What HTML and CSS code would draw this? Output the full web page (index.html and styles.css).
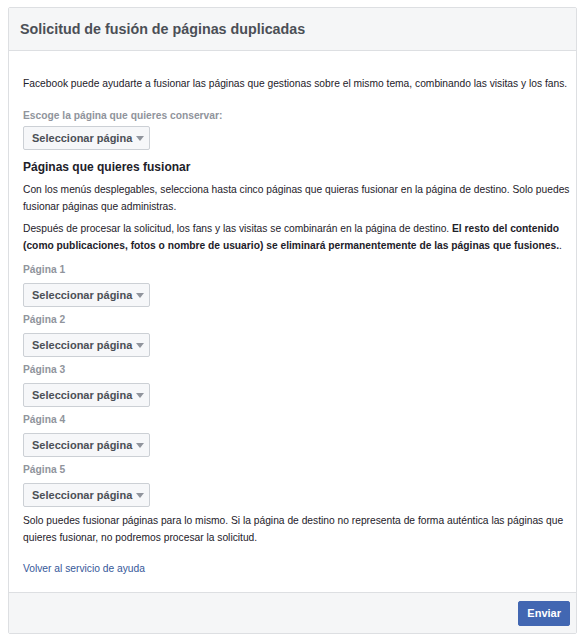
FILE: index.html
```html
<!DOCTYPE html>
<html lang="es">
<head>
<meta charset="utf-8">
<title>Solicitud de fusión de páginas duplicadas</title>
<link rel="stylesheet" href="styles.css">
</head>
<body>
<div class="panel">
  <div class="panel-header">
    <h1 class="title">Solicitud de fusión de páginas duplicadas</h1>
  </div>
  <div class="panel-body">
    <p class="intro">Facebook puede ayudarte a fusionar las páginas que gestionas sobre el mismo tema, combinando las visitas y los fans.</p>

    <div class="field field-keep">
      <div class="label">Escoge la página que quieres conservar:</div>
      <button class="select">Seleccionar página <span class="caret"></span></button>
    </div>

    <h2 class="subtitle">Páginas que quieres fusionar</h2>
    <p class="text">Con los menús desplegables, selecciona hasta cinco páginas que quieras fusionar en la página de destino. Solo puedes fusionar páginas que administras.</p>
    <p class="text text-last">Después de procesar la solicitud, los fans y las visitas se combinarán en la página de destino. <b>El resto del contenido (como publicaciones, fotos o nombre de usuario) se eliminará permanentemente de las páginas que fusiones.</b>.</p>

    <div class="field">
      <div class="label">Página 1</div>
      <button class="select">Seleccionar página <span class="caret"></span></button>
    </div>
    <div class="field">
      <div class="label">Página 2</div>
      <button class="select">Seleccionar página <span class="caret"></span></button>
    </div>
    <div class="field">
      <div class="label">Página 3</div>
      <button class="select">Seleccionar página <span class="caret"></span></button>
    </div>
    <div class="field">
      <div class="label">Página 4</div>
      <button class="select">Seleccionar página <span class="caret"></span></button>
    </div>
    <div class="field">
      <div class="label">Página 5</div>
      <button class="select">Seleccionar página <span class="caret"></span></button>
    </div>

    <p class="text note">Solo puedes fusionar páginas para lo mismo. Si la página de destino no representa de forma auténtica las páginas que quieres fusionar, no podremos procesar la solicitud.</p>

    <a class="back" href="#">Volver al servicio de ayuda</a>
  </div>
  <div class="panel-footer">
    <button class="submit">Enviar</button>
  </div>
</div>
</body>
</html>
```
FILE: styles.css
```css
* { box-sizing: border-box; }
body {
  margin: 0;
  background: #fff;
  font-family: "Liberation Sans", Arial, sans-serif;
  font-size: 10.25px;
  color: #1d2129;
}
.panel {
  margin: 7px 7px 0 8px;
  border: 1px solid #dddfe2;
  border-radius: 2px;
}
.panel-header {
  background: #f5f6f7;
  border-bottom: 1px solid #dddfe2;
  height: 43px;
  padding: 0 11px;
  display: flex;
  align-items: center;
}
.title {
  margin: 0;
  font-size: 14.3px;
  font-weight: bold;
  color: #4b4f56;
}
.panel-body {
  padding: 24px 6px 15px 14px;
}
p { margin: 0; }
.intro { line-height: 17px; margin-bottom: 16px; }
.text { line-height: 17px; margin-bottom: 5px; }
.text-last { margin-bottom: 8px; }
.field { margin-bottom: 5px; }
.field-keep { margin-bottom: 8px; }
.field-keep .label { margin-bottom: 2px; }
.label {
  color: #90949c;
  font-weight: bold;
  line-height: 16px;
  margin-bottom: 5px;
}
.select {
  display: inline-flex;
  align-items: center;
  gap: 4px;
  height: 24px;
  padding: 0 5px 0 8px;
  border: 1px solid #ccd0d5;
  border-radius: 2px;
  background: #f6f7f9;
  color: #4b4f56;
  font-family: "Liberation Sans", Arial, sans-serif;
  font-size: 11px;
  font-weight: bold;
}
.caret {
  width: 0;
  height: 0;
  border-left: 4px solid transparent;
  border-right: 4px solid transparent;
  border-top: 5px solid #90949c;
  margin-top: 1px;
}
.subtitle {
  margin: 0 0 5px 0;
  font-size: 12px;
  font-weight: bold;
  line-height: 18px;
  color: #1d2129;
}
.note { margin-top: 5px; margin-bottom: 14px; }
.back {
  display: block;
  color: #365899;
  text-decoration: none;
  line-height: 17px;
}
.panel-footer {
  background: #f5f6f7;
  border-top: 1px solid #dddfe2;
  height: 41px;
  padding: 0 6px 0 12px;
  display: flex;
  align-items: center;
  justify-content: flex-end;
}
.submit {
  height: 25px;
  padding: 0 8px;
  border: 1px solid #4267b2;
  border-radius: 2px;
  background: #4267b2;
  color: #fff;
  font-family: "Liberation Sans", Arial, sans-serif;
  font-size: 11px;
  font-weight: bold;
}
```
